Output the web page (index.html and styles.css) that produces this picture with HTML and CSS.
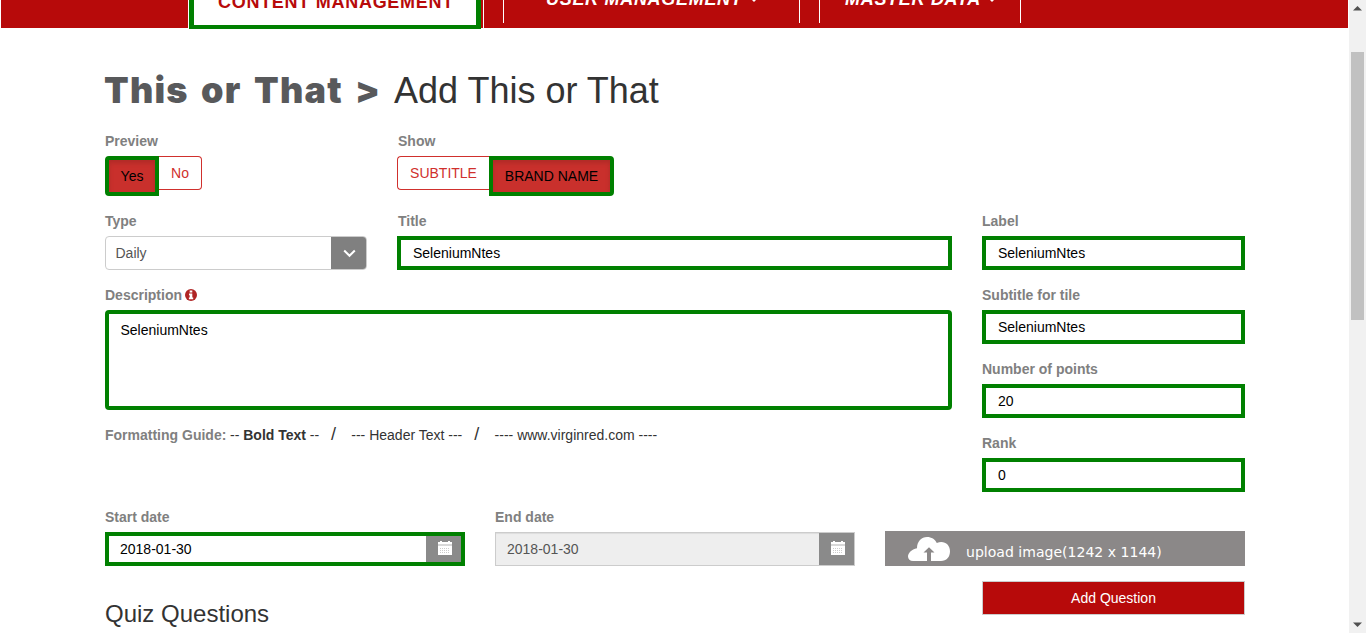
FILE: index.html
```html
<!DOCTYPE html>
<html lang="en">
<head>
<meta charset="utf-8">
<title>Add This or That</title>
<link rel="stylesheet" href="styles.css">
</head>
<body>
<div class="page">
  <nav class="nav">
    <div class="nav-item active"><span class="nav-content">CONTENT MANAGEMENT</span></div>
    <div class="nav-item user"><span class="nav-user">USER MANAGEMENT</span><i class="caret"></i></div>
    <div class="nav-item master"><span class="nav-master">MASTER DATA</span><i class="caret"></i></div>
  </nav>
  <main class="container">
    <h1 class="title"><span class="crumb">This or That &gt;</span><span class="current">Add This or That</span></h1>
    <div class="row toggles">
      <div class="field">
        <label class="label">Preview</label>
        <div class="group"><button class="btn on first yes">Yes</button><button class="btn last no">No</button></div>
      </div>
      <div class="field">
        <label class="label inset">Show</label>
        <div class="group"><button class="btn first subtitle">SUBTITLE</button><button class="btn on last brand">BRAND NAME</button></div>
      </div>
    </div>
    <div class="columns">
      <div class="left">
        <div class="row type-row">
          <div class="field">
            <label class="label">Type</label>
            <div class="select"><span>Daily</span><div class="arrow"><svg width="13" height="9" viewBox="0 0 13 9"><path d="M1.2 1.5 6.5 6.8 11.8 1.5" fill="none" stroke="#fff" stroke-width="2"/></svg></div></div>
          </div>
          <div class="field">
            <label class="label inset">Title</label>
            <div class="input">SeleniumNtes</div>
          </div>
        </div>
        <div class="field">
          <label class="label">Description <svg class="info" width="12" height="12" viewBox="0 0 12 12"><circle cx="6" cy="6" r="6" fill="#b02525"/><path d="M4.700 1.500h2.600v2H4.700zM4 4.500h3.300v4H8.200V10.300H3.900V8.500H4.700V6.200H4z" fill="#fff"/></svg></label>
          <div class="textarea">SeleniumNtes</div>
        </div>
        <div class="guide"><b class="guide-label">Formatting Guide:</b><span class="g1">-- <b>Bold Text</b> --</span><span class="slash">/</span><span class="g2">--- Header Text ---</span><span class="slash">/</span><span class="g3">---- www.virginred.com ----</span></div>
      </div>
      <div class="right">
        <div class="field"><label class="label">Label</label><div class="input">SeleniumNtes</div></div>
        <div class="field"><label class="label">Subtitle for tile</label><div class="input">SeleniumNtes</div></div>
        <div class="field"><label class="label">Number of points</label><div class="input">20</div></div>
        <div class="field"><label class="label">Rank</label><div class="input">0</div></div>
      </div>
    </div>
    <div class="row dates">
      <div class="field">
        <label class="label">Start date</label>
        <div class="date start"><span>2018-01-30</span><div class="cal"><svg width="14" height="14" viewBox="0 0 14 14"><path d="M0 1h2V0h2v1h6V0h2v1h2v2H0zM0 5h14v9H0z" fill="#fff"/><path d="M0 3h14v2H0z" fill="#d8d8d8"/><path d="M2 7.5h10M2 9.5h10M2 11.5h10" stroke="#ccc" stroke-dasharray="1 1"/></svg></div></div>
      </div>
      <div class="field">
        <label class="label">End date</label>
        <div class="date end"><span>2018-01-30</span><div class="cal"><svg width="14" height="14" viewBox="0 0 14 14"><path d="M0 1h2V0h2v1h6V0h2v1h2v2H0zM0 5h14v9H0z" fill="#fff"/><path d="M0 3h14v2H0z" fill="#d8d8d8"/><path d="M2 7.5h10M2 9.5h10M2 11.5h10" stroke="#ccc" stroke-dasharray="1 1"/></svg></div></div>
      </div>
      <div class="upload"><svg width="42" height="24" viewBox="0 0 42 24"><path d="M5 24C2 24 0 22 0 19.500c0-3.500 3.500-7 9-8.300C9 4.500 13.500 0 19 0c4.500 0 8.200 2.300 9.800 6C36 3 42 7.500 42 14.200 42 20 38.500 24 33 24z" fill="#fff"/><path d="M19 24V15.500h-3.500L21 10.200l5.500 5.300H23V24z" fill="#8b8888"/></svg><span>upload image(1242 x 1144)</span></div>
    </div>
    <div class="footer"><h2 class="quiz">Quiz Questions</h2><button class="add">Add Question</button></div>
  </main>
</div>
<div class="scrollbar">
  <svg width="9" height="5" viewBox="0 0 9 5"><path d="M0 4.500 4.500 0 9 4.500z" fill="#505050"/></svg>
  <div class="thumb"></div>
  <svg width="9" height="5" viewBox="0 0 9 5"><path d="M0 .5 4.500 5 9 .5z" fill="#505050"/></svg>
</div>
</body>
</html>
```

FILE: styles.css
```css
* { box-sizing: border-box; }
body {
  margin: 0;
  height: 633px;
  overflow: hidden;
  display: flex;
  font: 14px/20px "Liberation Sans", Arial, sans-serif;
  color: #333;
  background: #fff;
}
.page { width: 1349px; height: 633px; overflow: hidden; }

.nav {
  height: 28px;
  margin: 0 1px;
  background: #b70a0a;
  display: flex;
  align-items: flex-start;
  font-size: 18px;
  font-weight: bold;
  color: #fff;
  white-space: nowrap;
}
.nav-item { display: flex; line-height: 20px; letter-spacing: .7px; }
.active {
  width: 292px;
  height: 29px;
  margin-left: 188px;
  border: 5px solid #008000;
  border-top: 0;
  border-bottom-width: 4px;
  background: #fff;
  color: #b70a0a;
  box-shadow: -1px 0 #fff;
  padding-left: 24px;
}
.user, .master { height: 23px; border: solid #fff; border-width: 0 1px; font-style: italic; }
.user { width: 297px; margin-left: 22px; padding-left: 42px; }
.user::before { content: ""; width: 1px; height: 28px; margin: 0 62px 0 -63px; background: #fff; }
.master { width: 202px; margin-left: 19px; padding-left: 25px; }
.nav-content { margin-top: -8px; letter-spacing: .72px; }
.nav-user, .nav-master { margin-top: -11px; }
.caret {
  width: 0;
  height: 0;
  margin: -2px 0 0 7px;
  border: solid transparent;
  border-width: 4px 4px 0;
  border-top-color: #fff;
}

.container { width: 1140px; margin: 0 0 0 105px; }
.title { display: flex; align-items: baseline; margin: 42px 0 21px; height: 40px; font-size: 36px; line-height: 40px; font-weight: normal; white-space: nowrap; }
.crumb { width: 290px; margin-left: -1px; font: 900 36px/40px Inter, sans-serif; letter-spacing: 1.2px; word-spacing: 4px; color: #58595b; }
.row { display: flex; gap: 30px; }
.field { margin-bottom: 15px; }
.label { display: block; height: 20px; margin-bottom: 5px; font-weight: bold; color: #808080; }
.inset { padding-left: 1px; }
.toggles .field { width: 262px; }
.group { display: flex; align-items: flex-start; height: 40px; }
.btn {
  height: 34px;
  padding: 0;
  border: 1px solid #d0302d;
  background: #fff;
  color: #d0302d;
  font: 14px/20px "Liberation Sans", Arial, sans-serif;
}
.first { border-radius: 4px 0 0 4px; border-right: 0; }
.last { border-radius: 0 4px 4px 0; border-left: 0; }
.on { height: 40px; border: 4px solid #008000; background: #c9302c; color: #000; box-shadow: inset 0 3px 5px rgba(0,0,0,.125); }
.yes { width: 54px; }
.no { width: 43px; }
.subtitle { width: 92px; }
.brand { width: 125px; }

.columns { display: flex; gap: 30px; height: 296px; }
.left { width: 847px; }
.right { width: 263px; }
.type-row .field:first-child { width: 262px; }
.type-row .field:last-child { width: 555px; }
.input { height: 34px; border: 4px solid #008000; padding: 3px 12px; color: #000; }
.select { height: 34px; border: 1px solid #ccc; border-radius: 4px; display: flex; justify-content: space-between; overflow: hidden; color: #555; padding-left: 9.5px; line-height: 32px; }
.arrow { width: 36px; margin-right: -1px; background: #808080; display: grid; place-items: center; }
.info { vertical-align: -1px; margin-left: -.5px; }
.textarea { height: 100px; border: 4px solid #008000; border-radius: 4px; padding: 6px 11.5px; color: #000; }
.guide { display: flex; white-space: nowrap; height: 20px; }
.guide-label { color: #808080; width: 125px; }
.g1 { width: 101px; }
.g2 { width: 123px; }
.slash { width: 20.3px; font-size: 18px; line-height: 18px; }

.dates { height: 74px; }
.dates .field { width: 360px; }
.date { height: 34px; display: flex; justify-content: space-between; }
.start { border: 4px solid #008000; color: #000; padding-left: 11px; line-height: 26px; }
.end { border: 1px solid #ccc; color: #555; background: #eee; padding-left: 11px; line-height: 32px; box-shadow: inset 0 1px 1px rgba(0,0,0,.075); }
.cal { width: 35px; padding-left: 2px; background: #8a8a8a; display: grid; place-items: center; }
.cal svg { display: block; margin-top: -2px; }
.upload { width: 360px; height: 35px; margin-top: 24px; background: #8b8888; color: #fff; display: flex; align-items: center; padding: 1px 0 0 23px; gap: 16px; font: 14.050px/20px "DejaVu Sans", sans-serif; white-space: nowrap; }
.upload span { margin-top: 5px; }
.footer { display: flex; justify-content: space-between; }
.quiz { margin: 20px 0 0; font-size: 24px; line-height: 26px; font-weight: normal; }
.add { width: 263px; height: 34px; border: 1px solid #ccc; background: #b70a0a; color: #fff; font: 14px/20px "Liberation Sans", Arial, sans-serif; }

.scrollbar { width: 17px; height: 633px; background: #f1f1f1; display: flex; flex-direction: column; align-items: center; padding: 6px 0; }
.thumb { width: 13px; height: 268px; margin: 41px 0 auto; background: #c1c1c1; }
```
